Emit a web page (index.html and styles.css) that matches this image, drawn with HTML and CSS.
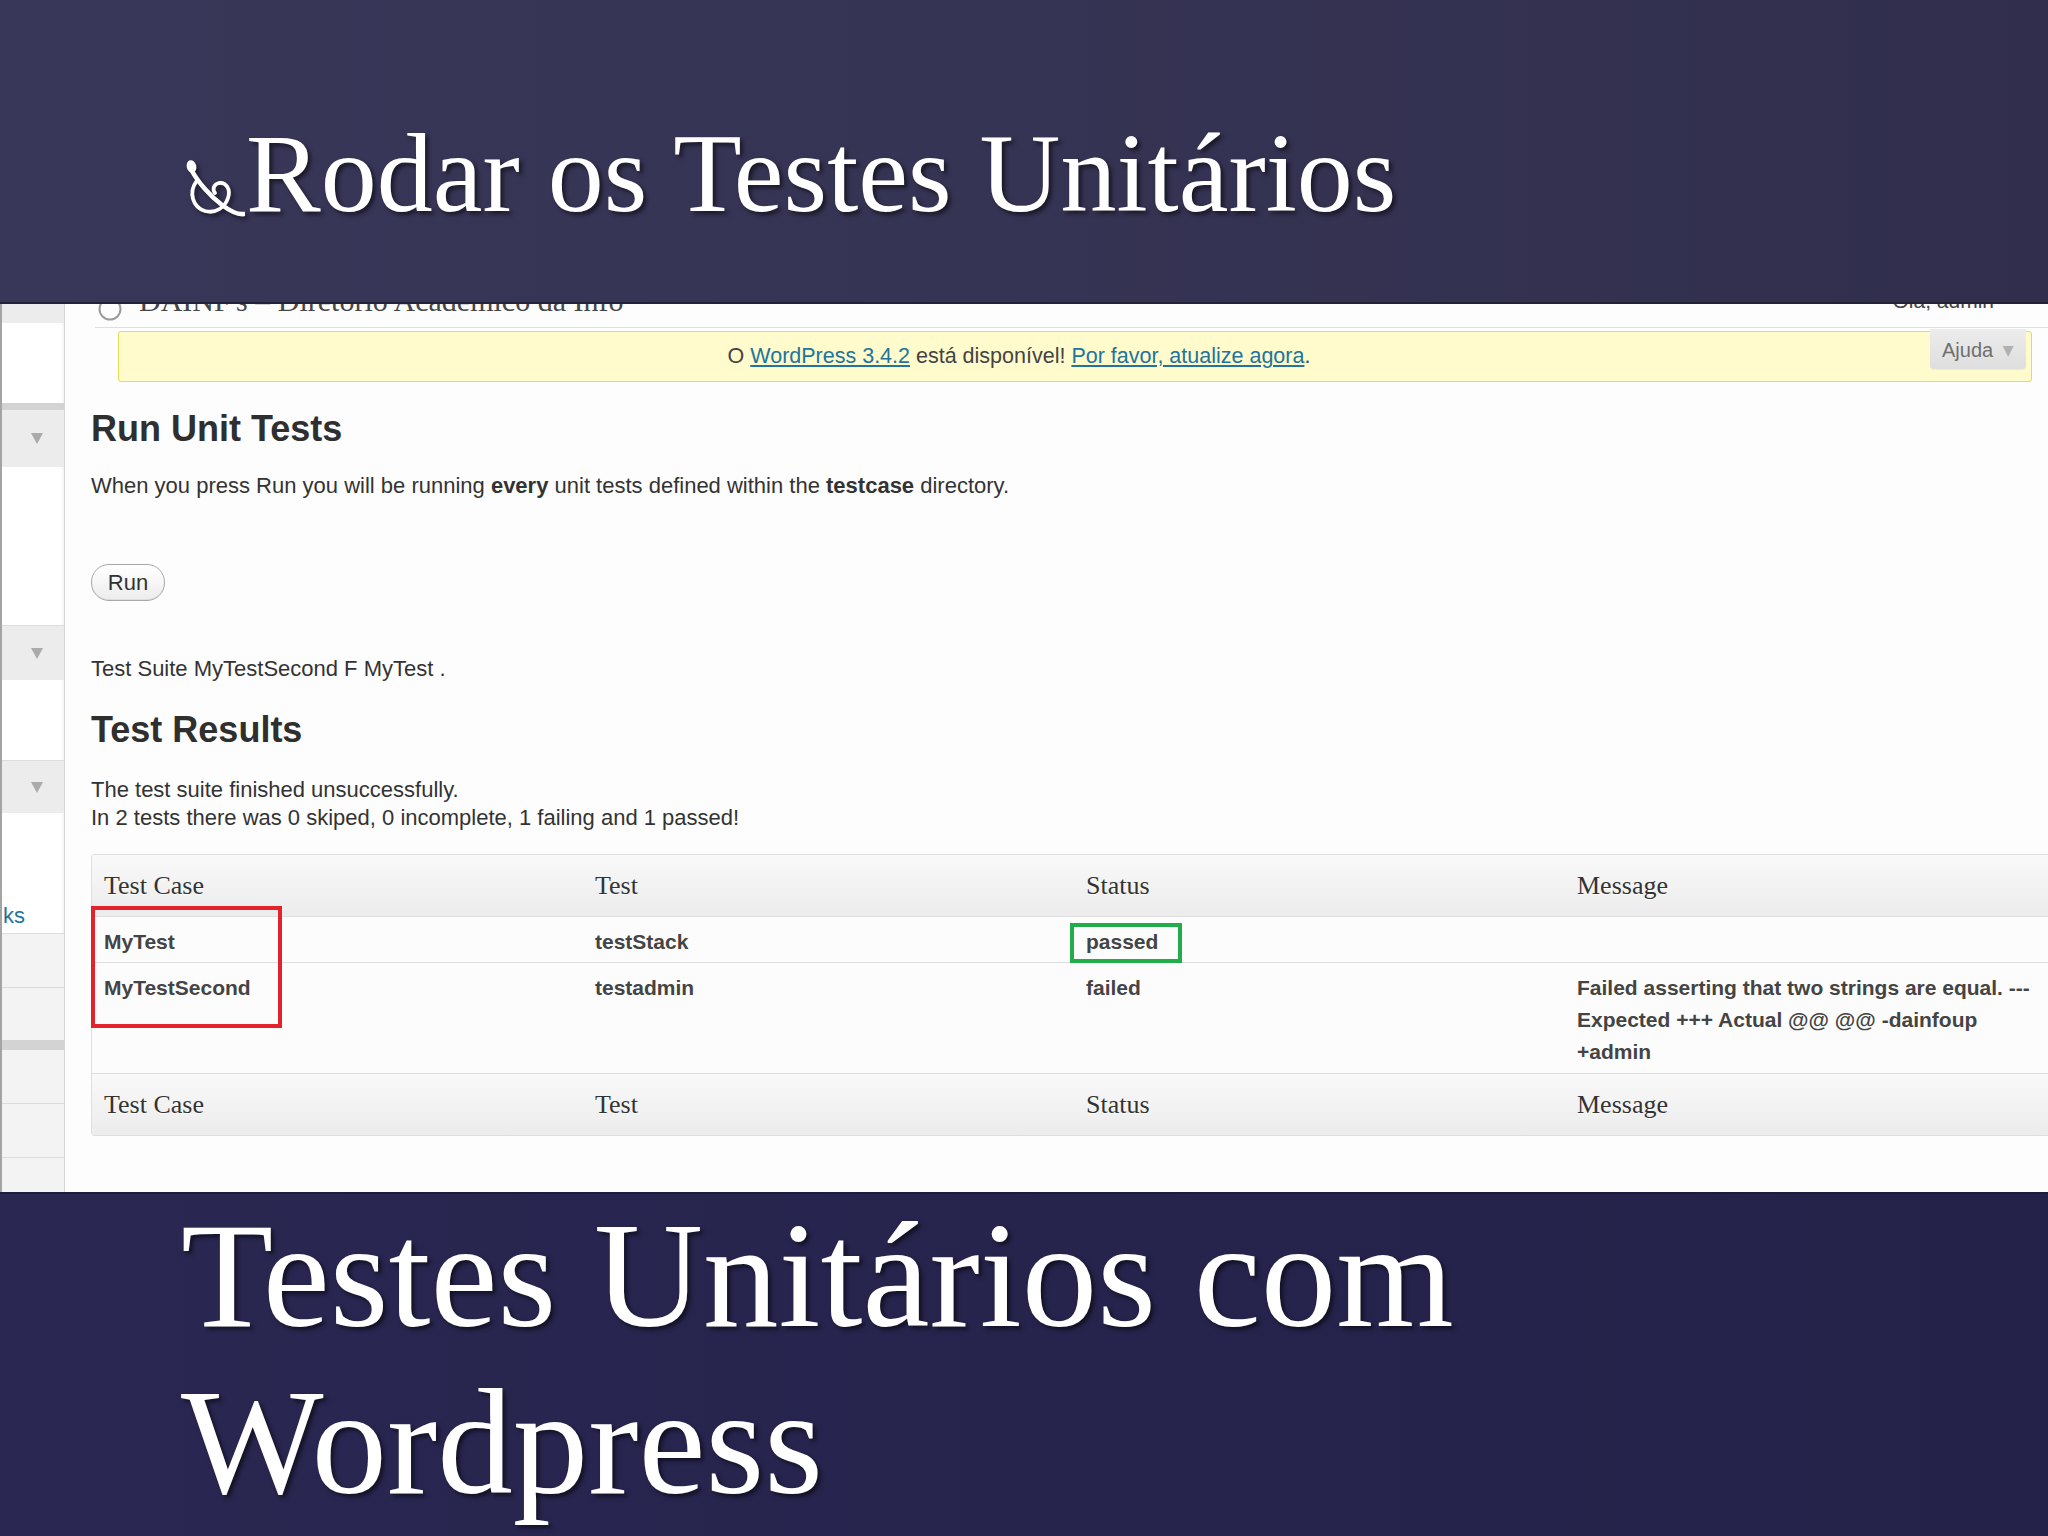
FILE: index.html
```html
<!DOCTYPE html>
<html lang="pt">
<head>
<meta charset="utf-8">
<title>Rodar os Testes Unitários</title>
<link rel="stylesheet" href="styles.css">
</head>
<body>
<div class="slide">
  <header class="band band-top">
    <h1 class="title">
      <svg class="bullet" width="65" height="75" viewBox="10 10 65 75" aria-hidden="true">
        <ellipse cx="21.5" cy="26.5" rx="4.8" ry="6.4" fill="#fff" transform="rotate(-15 21.5 26.5)"/>
        <path d="M22,31 C28,42 40,56 52,65 C60,71 67,75 74,74" fill="none" stroke="#fff" stroke-width="4.6" stroke-linecap="round"/>
        <path d="M26,42 C19,52 22,67 35,71 C46,74 55,67 58,58 C61,49 56,42 49,43 C44,44 42,49 45,53" fill="none" stroke="#fff" stroke-width="3.8" stroke-linecap="round"/>
      </svg>
      <span>Rodar os Testes Unitários</span>
    </h1>
  </header>

  <section class="shot">
    <aside class="sidebar">
      <div class="sb sb-gray h19"></div>
      <div class="sb h80"></div>
      <div class="sb sb-dark h7"></div>
      <div class="sb sb-gray sb-toggle h57"><span class="tri"></span></div>
      <div class="sb h158"></div>
      <div class="sb sb-gray sb-line sb-toggle h55"><span class="tri"></span></div>
      <div class="sb h80"></div>
      <div class="sb sb-gray sb-line sb-toggle h53"><span class="tri"></span></div>
      <div class="sb sb-link h120"><a href="#">ks</a></div>
      <div class="sb sb-light sb-line h54"></div>
      <div class="sb sb-light sb-line h53"></div>
      <div class="sb sb-dark h10"></div>
      <div class="sb sb-light h53"></div>
      <div class="sb sb-light sb-line h54"></div>
      <div class="sb sb-light sb-line h35"></div>
    </aside>

    <main class="wp">
      <div class="wp-head">
        <div class="site">
          <svg class="wp-logo" width="24" height="24" viewBox="0 0 24 24" aria-hidden="true">
            <circle cx="12" cy="12" r="10.5" fill="none" stroke="#9a9a9a" stroke-width="2"/>
          </svg>
          <span class="site-name">DAINF's – Diretório Acadêmico da Info</span>
        </div>
        <span class="howdy">Olá, admin</span>
      </div>

      <div class="nag">
        O <a href="#">WordPress 3.4.2</a> está disponível! <a href="#">Por favor, atualize agora</a>.
        <div class="help-tab">Ajuda <span class="help-arrow">▼</span></div>
      </div>

      <h2 class="heading">Run Unit Tests</h2>
      <p class="lead">When you press Run you will be running <b>every</b> unit tests defined within the <b>testcase</b> directory.</p>

      <button class="run" type="button">Run</button>

      <p class="suite">Test Suite MyTestSecond F MyTest .</p>

      <h2 class="heading">Test Results</h2>
      <p class="summary">The test suite finished unsuccessfully.<br>In 2 tests there was 0 skiped, 0 incomplete, 1 failing and 1 passed!</p>

      <div class="table-wrap">
        <table class="widefat">
          <colgroup><col class="c"><col class="c"><col class="c"><col class="c"></colgroup>
          <thead>
            <tr><th>Test Case</th><th>Test</th><th>Status</th><th>Message</th></tr>
          </thead>
          <tbody>
            <tr><td>MyTest</td><td>testStack</td><td>passed</td><td></td></tr>
            <tr class="tall"><td>MyTestSecond</td><td>testadmin</td><td>failed</td><td>Failed asserting that two strings are equal. --- Expected +++ Actual @@ @@ -dainfoup +admin</td></tr>
          </tbody>
          <tfoot>
            <tr><th>Test Case</th><th>Test</th><th>Status</th><th>Message</th></tr>
          </tfoot>
        </table>
        <div class="mark mark-red"></div>
        <div class="mark mark-green"></div>
      </div>
    </main>
  </section>

  <footer class="band band-bottom">
    <p class="subtitle">Testes Unitários com<br>Wordpress</p>
  </footer>
</div>
</body>
</html>
```

FILE: styles.css
```css
html, body {
  margin: 0;
  padding: 0;
}

body {
  width: 2048px;
  height: 1536px;
  overflow: hidden;
  background: #2b2950;
  font-family: "Liberation Sans", Arial, sans-serif;
}

.slide {
  width: 2048px;
  height: 1536px;
  display: flex;
  flex-direction: column;
}

/* ---------- slide bands ---------- */
.band {
  flex: none;
  color: #fff;
  font-family: "Liberation Serif", "Times New Roman", serif;
}

.band-top {
  height: 304px;
  background: linear-gradient(90deg, #393759 0%, #363454 45%, #312e4d 100%);
  box-shadow: inset 0 -2px 0 #24223a;
}

.band-bottom {
  height: 344px;
  background: linear-gradient(90deg, #2a2852 0%, #26244d 50%, #242249 100%);
  box-shadow: inset 0 2px 0 #1e1c3e;
}

.title {
  margin: 0;
  padding: 108px 0 0 180px;
  display: flex;
  align-items: flex-start;
  gap: 1px;
  font-weight: normal;
  font-size: 112px;
  line-height: 130px;
  text-shadow: 3px 3px 4px rgba(0, 0, 0, 0.55);
}

.bullet {
  flex: none;
  margin-top: 42px;
  filter: drop-shadow(3px 3px 2px rgba(0, 0, 0, 0.5));
}

.subtitle {
  margin: 0;
  padding: 0 0 0 181px;
  font-size: 151px;
  line-height: 167px;
  text-shadow: 3px 3px 4px rgba(0, 0, 0, 0.55);
}

/* ---------- screenshot ---------- */
.shot {
  flex: none;
  height: 888px;
  display: flex;
  overflow: hidden;
  background: #fdfdfd;
}

.sidebar {
  flex: none;
  width: 65px;
  box-sizing: border-box;
  border-left: 2px solid #a4a4a4;
  border-right: 1px solid #d6d6d6;
  display: flex;
  flex-direction: column;
  background: #fff;
  box-shadow: inset -2px 0 2px rgba(0, 0, 0, 0.04);
}

.sb { flex: none; }
.sb-gray { background: #ececec; }
.sb-light { background: #f3f3f3; }
.sb-dark { background: #d3d3d3; }
.sb-line { border-top: 1px solid #dcdcdc; box-sizing: border-box; }

.sb-toggle {
  display: flex;
  align-items: center;
  justify-content: flex-end;
  padding-right: 21px;
}

.tri {
  width: 0;
  height: 0;
  border-left: 6px solid transparent;
  border-right: 6px solid transparent;
  border-top: 11px solid #ababab;
}

.sb-link {
  padding-top: 89px;
  box-sizing: border-box;
  font-size: 22px;
  line-height: 28px;
  padding-left: 1px;
}

.sb-link a {
  color: #21759b;
  text-decoration: none;
}

.h7 { height: 7px; }
.h10 { height: 10px; }
.h19 { height: 19px; }
.h35 { height: 35px; }
.h53 { height: 53px; }
.h54 { height: 54px; }
.h55 { height: 55px; }
.h57 { height: 57px; }
.h80 { height: 80px; }
.h120 { height: 120px; }
.h158 { height: 158px; }

/* ---------- wp admin ---------- */
.wp {
  flex: 1;
  min-width: 0;
  padding-left: 26px;
  color: #333;
}

.wp-head {
  margin: -30px 0 0 4px;
  height: 53px;
  border-bottom: 1px solid #dfdfdf;
  display: flex;
  justify-content: space-between;
  line-height: 53px;
  color: #464646;
}

.site {
  display: flex;
  align-items: center;
  gap: 17px;
  padding-left: 3px;
}

.wp-logo {
  margin-top: 16px;
}

.site-name {
  font-family: "Liberation Serif", "Times New Roman", serif;
  font-size: 30px;
}

.howdy {
  margin-right: 54px;
  font-size: 21px;
}

.nag {
  position: relative;
  margin: 3px 16px 0 27px;
  height: 49px;
  border: 1px solid #e6db55;
  border-radius: 3px;
  background: #fffbcc;
  padding: 0 120px 0 8px;
  text-align: center;
  font-size: 21.5px;
  line-height: 49px;
  color: #444;
}

.nag a {
  color: #21759b;
}

.help-tab {
  position: absolute;
  top: -3px;
  right: 5px;
  width: 96px;
  height: 40px;
  box-sizing: border-box;
  border-radius: 0 0 4px 4px;
  background: linear-gradient(#ececec, #dedede);
  box-shadow: 0 1px 1px rgba(0, 0, 0, 0.06);
  font-size: 20px;
  line-height: 42px;
  color: #6f6f6f;
  text-align: left;
  padding-left: 12px;
}

.help-arrow {
  font-family: "DejaVu Sans", sans-serif;
  font-size: 14px;
  color: #b0b0b0;
  vertical-align: 2px;
  margin-left: 4px;
}

.heading {
  margin: 25px 0 0;
  font-size: 36px;
  line-height: 44px;
  font-weight: bold;
  color: #2f2f2f;
}

.lead,
.suite,
.summary {
  margin: 0;
  font-size: 22px;
  line-height: 28px;
  color: #333;
}

.lead { margin-top: 21px; }
.suite { margin-top: 54px; }
.summary { margin-top: 24px; }

.run {
  display: block;
  margin-top: 64px;
  width: 74px;
  height: 37px;
  padding: 0;
  border: 1px solid #a9a9a9;
  border-radius: 18px;
  background: linear-gradient(#ffffff, #ededed);
  font-family: "Liberation Sans", Arial, sans-serif;
  font-size: 22px;
  line-height: 35px;
  color: #333;
  box-shadow: inset 0 -1px 0 rgba(0, 0, 0, 0.06);
}

/* ---------- table ---------- */
.table-wrap {
  position: relative;
  margin-top: 22px;
  width: 1966px;
}

.widefat {
  width: 1966px;
  table-layout: fixed;
  border-collapse: separate;
  border-spacing: 0;
  border: 1px solid #dfdfdf;
  border-radius: 3px;
  background: #fcfcfc;
}

.widefat col.c { width: 491px; }

.widefat th {
  padding: 16px 12px 15px;
  text-align: left;
  font-family: "Liberation Serif", Georgia, serif;
  font-weight: normal;
  font-size: 26px;
  line-height: 30px;
  color: #333;
  text-shadow: 0 1px 0 #fff;
  background: linear-gradient(#f9f9f9, #ececec);
}

.widefat thead th {
  border-bottom: 1px solid #dfdfdf;
}

.widefat td {
  padding: 9px 12px 4px;
  vertical-align: top;
  font-size: 21px;
  line-height: 32px;
  font-weight: bold;
  color: #444;
  border-bottom: 1px solid #dfdfdf;
}

.widefat tr.tall td {
  padding-bottom: 5px;
}

.mark {
  position: absolute;
  box-sizing: border-box;
  border-width: 4px;
  border-style: solid;
}

.mark-red {
  left: 0;
  top: 52px;
  width: 191px;
  height: 122px;
  border-color: #e3222b;
}

.mark-green {
  left: 979px;
  top: 69px;
  width: 112px;
  height: 40px;
  border-color: #22ad4b;
}
```
